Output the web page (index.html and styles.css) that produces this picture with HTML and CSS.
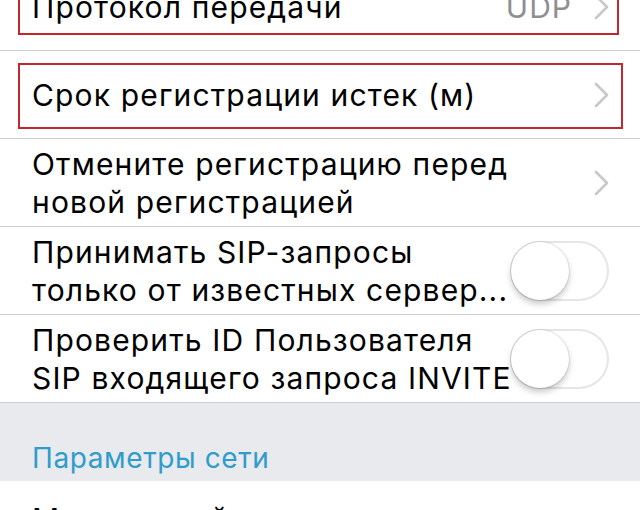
FILE: index.html
```html
<!DOCTYPE html>
<html lang="ru">
<head>
<meta charset="utf-8">
<title>Настройки SIP</title>
<link rel="stylesheet" href="styles.css">
</head>
<body>
<div class="screen">
  <div class="list">
    <div class="row first">
      <span class="label">Протокол передачи</span>
      <span class="value">UDP</span>
      <svg class="chevron" viewBox="0 0 15 26"><path d="M2 2 L13 13 L2 24" fill="none" stroke="#c7c7cc" stroke-width="2.6" stroke-linecap="round" stroke-linejoin="round"/></svg>
      <div class="mark mark1"></div>
    </div>
    <div class="row">
      <span class="label">Срок регистрации истек (м)</span>
      <svg class="chevron" viewBox="0 0 15 26"><path d="M2 2 L13 13 L2 24" fill="none" stroke="#c7c7cc" stroke-width="2.6" stroke-linecap="round" stroke-linejoin="round"/></svg>
      <div class="mark mark2"></div>
    </div>
    <div class="row">
      <span class="label"><span class="line">Отмените регистрацию перед</span><span class="line">новой регистрацией</span></span>
      <svg class="chevron" viewBox="0 0 15 26"><path d="M2 2 L13 13 L2 24" fill="none" stroke="#c7c7cc" stroke-width="2.6" stroke-linecap="round" stroke-linejoin="round"/></svg>
    </div>
    <div class="row">
      <span class="label"><span class="line">Принимать SIP-запросы</span><span class="line">только от известных сервер...</span></span>
      <div class="toggle"><div class="knob"></div></div>
    </div>
    <div class="row">
      <span class="label"><span class="line">Проверить ID Пользователя</span><span class="line">SIP входящего запроса INVITE</span></span>
      <div class="toggle"><div class="knob"></div></div>
    </div>
  </div>
  <div class="section-header">Параметры сети</div>
  <div class="row last">
    <span class="label"><span class="line">Межсетевой экран</span><span class="line">(NAT)</span></span>
  </div>
</div>
</body>
</html>
```

FILE: styles.css
```css
html, body {
  margin: 0;
  padding: 0;
  background: #ffffff;
}

body {
  font-family: "Inter", "Roboto", "Liberation Sans", sans-serif;
  color: #000;
  overflow: hidden;
}

.screen {
  width: 640px;
  height: 510px;
  overflow: hidden;
}

.list {
  margin-top: -37px;
}

.row {
  position: relative;
  display: flex;
  align-items: center;
  height: 87px;
  padding: 0 31px 0 32px;
  border-bottom: 1px solid #cfced3;
  background: #fff;
}

.row.last {
  border-bottom: none;
  align-items: flex-start;
  padding-top: 19px;
  box-sizing: border-box;
}

.label {
  flex: 1;
  min-width: 0;
  display: flex;
  flex-direction: column;
  font-size: 30px;
  line-height: 38px;
  white-space: nowrap;
  letter-spacing: 1.15px;
}

.line {
  display: block;
}

.value {
  font-size: 30px;
  letter-spacing: 1px;
  color: #8e8e93;
  margin-right: 22px;
}

.chevron {
  width: 15px;
  height: 26px;
  flex: none;
}

.toggle {
  flex: none;
  width: 99px;
  height: 60px;
  margin-left: -20px;
  border-radius: 30px;
  box-shadow: inset 0 0 0 2px #e6e6e9;
  background: #fff;
  display: flex;
  align-items: center;
  position: relative;
}

.knob {
  width: 58px;
  height: 58px;
  margin-left: 1px;
  border-radius: 50%;
  background: #fff;
  box-shadow: 0 4px 6px rgba(0, 0, 0, 0.22), 0 0 0 1px rgba(0, 0, 0, 0.08);
}

.mark {
  position: absolute;
  border: 2px solid #c4262e;
  pointer-events: none;
}

.mark1 {
  left: 18px;
  right: 21px;
  top: 12px;
  bottom: 15px;
}

.mark2 {
  left: 18px;
  right: 17px;
  top: 12px;
  bottom: 9px;
}

.section-header {
  box-sizing: border-box;
  height: 78px;
  background: #e8eaed;
  display: flex;
  align-items: flex-end;
  padding: 0 32px 6px;
  font-size: 28px;
  line-height: 34px;
  letter-spacing: 0.6px;
  color: #2f9ccb;
}
```
